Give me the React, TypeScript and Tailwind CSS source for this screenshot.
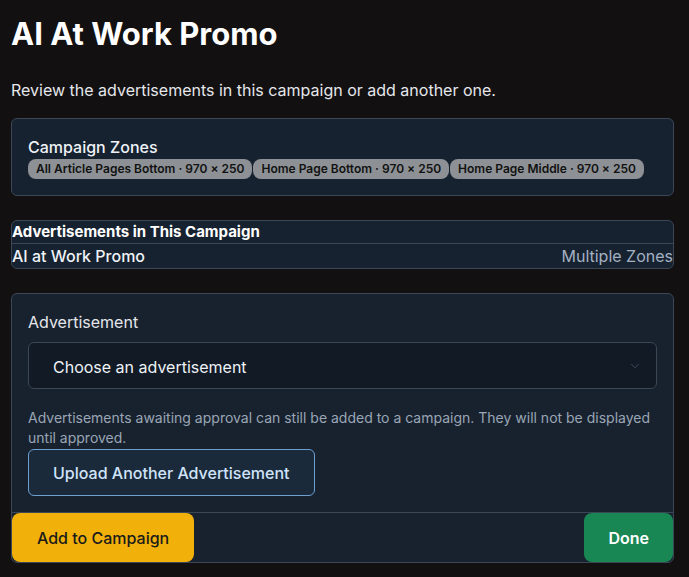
import { ChevronDown } from "lucide-react";

const zones = [
  "All Article Pages Bottom · 970 × 250",
  "Home Page Bottom · 970 × 250",
  "Home Page Middle · 970 × 250",
];

export default function App() {
  return (
    <div
      className="min-h-screen bg-[#121011] pl-[11px] pr-[15px] pt-[14px] pb-4 text-[#f3f4f6]"
      style={{ fontFamily: "Inter, 'Noto Sans', sans-serif" }}
    >
      <h1 className="text-[31px] leading-10 font-bold text-white">AI At Work Promo</h1>
      <p className="mt-6 text-base leading-6 text-[#e5e7eb]">
        Review the advertisements in this campaign or add another one.
      </p>

      {/* Zones */}
      <div className="mt-4 rounded-md border border-[#3b4756] bg-[#172230] p-4">
        <div className="text-base leading-6 font-medium text-[#eef2f7]">Campaign Zones</div>
        <div className="flex flex-wrap gap-px">
          {zones.map((z) => (
            <span
              key={z}
              className="h-5 rounded-lg bg-[#8d9196] px-2 text-xs leading-5 font-semibold text-[#111]"
            >
              {z}
            </span>
          ))}
        </div>
      </div>

      {/* Ads table */}
      <div className="mt-6 overflow-hidden rounded-md border border-[#3b4756] bg-[#172230]">
        <div className="border-b border-[#3b4756] text-[15px] leading-[22px] font-bold text-white">
          Advertisements in This Campaign
        </div>
        <div className="flex justify-between text-base leading-6">
          <span className="font-medium text-[#eef2f7]">AI at Work Promo</span>
          <span className="text-[#a3b1c2]">Multiple Zones</span>
        </div>
      </div>

      {/* Add form */}
      <div className="mt-6 overflow-hidden rounded-md border border-[#3b4756] bg-[#18222f]">
        <div className="p-4">
          <div className="mb-2 text-base leading-6 text-[#e5e7eb]">Advertisement</div>
          <div className="flex h-[47px] items-center justify-between rounded-md border border-[#3b4756] bg-[#111a25] pl-6 pr-[14px]">
            <span className="pt-0.5 text-base text-[#eef2f7]">Choose an advertisement</span>
            <ChevronDown className="h-3.5 w-3.5 text-[#465260]" strokeWidth={1.5} />
          </div>
          <p className="mt-[19px] text-sm leading-5 text-[#9aa6b5]">
            Advertisements awaiting approval can still be added to a campaign. They will not be displayed until
            approved.
          </p>
          <button className="mt-px h-[47px] rounded-md border border-[#6d9fcf] bg-[#1b2a3b] px-6 text-base font-medium text-[#cfe4fa]">
            Upload Another Advertisement
          </button>
        </div>
        <div className="flex justify-between border-t border-[#3b4756]">
          <button className="h-[49px] rounded-lg bg-[#f1b10a] px-[25px] text-base font-medium text-[#1a1a1a]">
            Add to Campaign
          </button>
          <button className="h-[49px] rounded-lg bg-[#198754] px-6 text-base font-semibold text-white">
            Done
          </button>
        </div>
      </div>
    </div>
  );
}
